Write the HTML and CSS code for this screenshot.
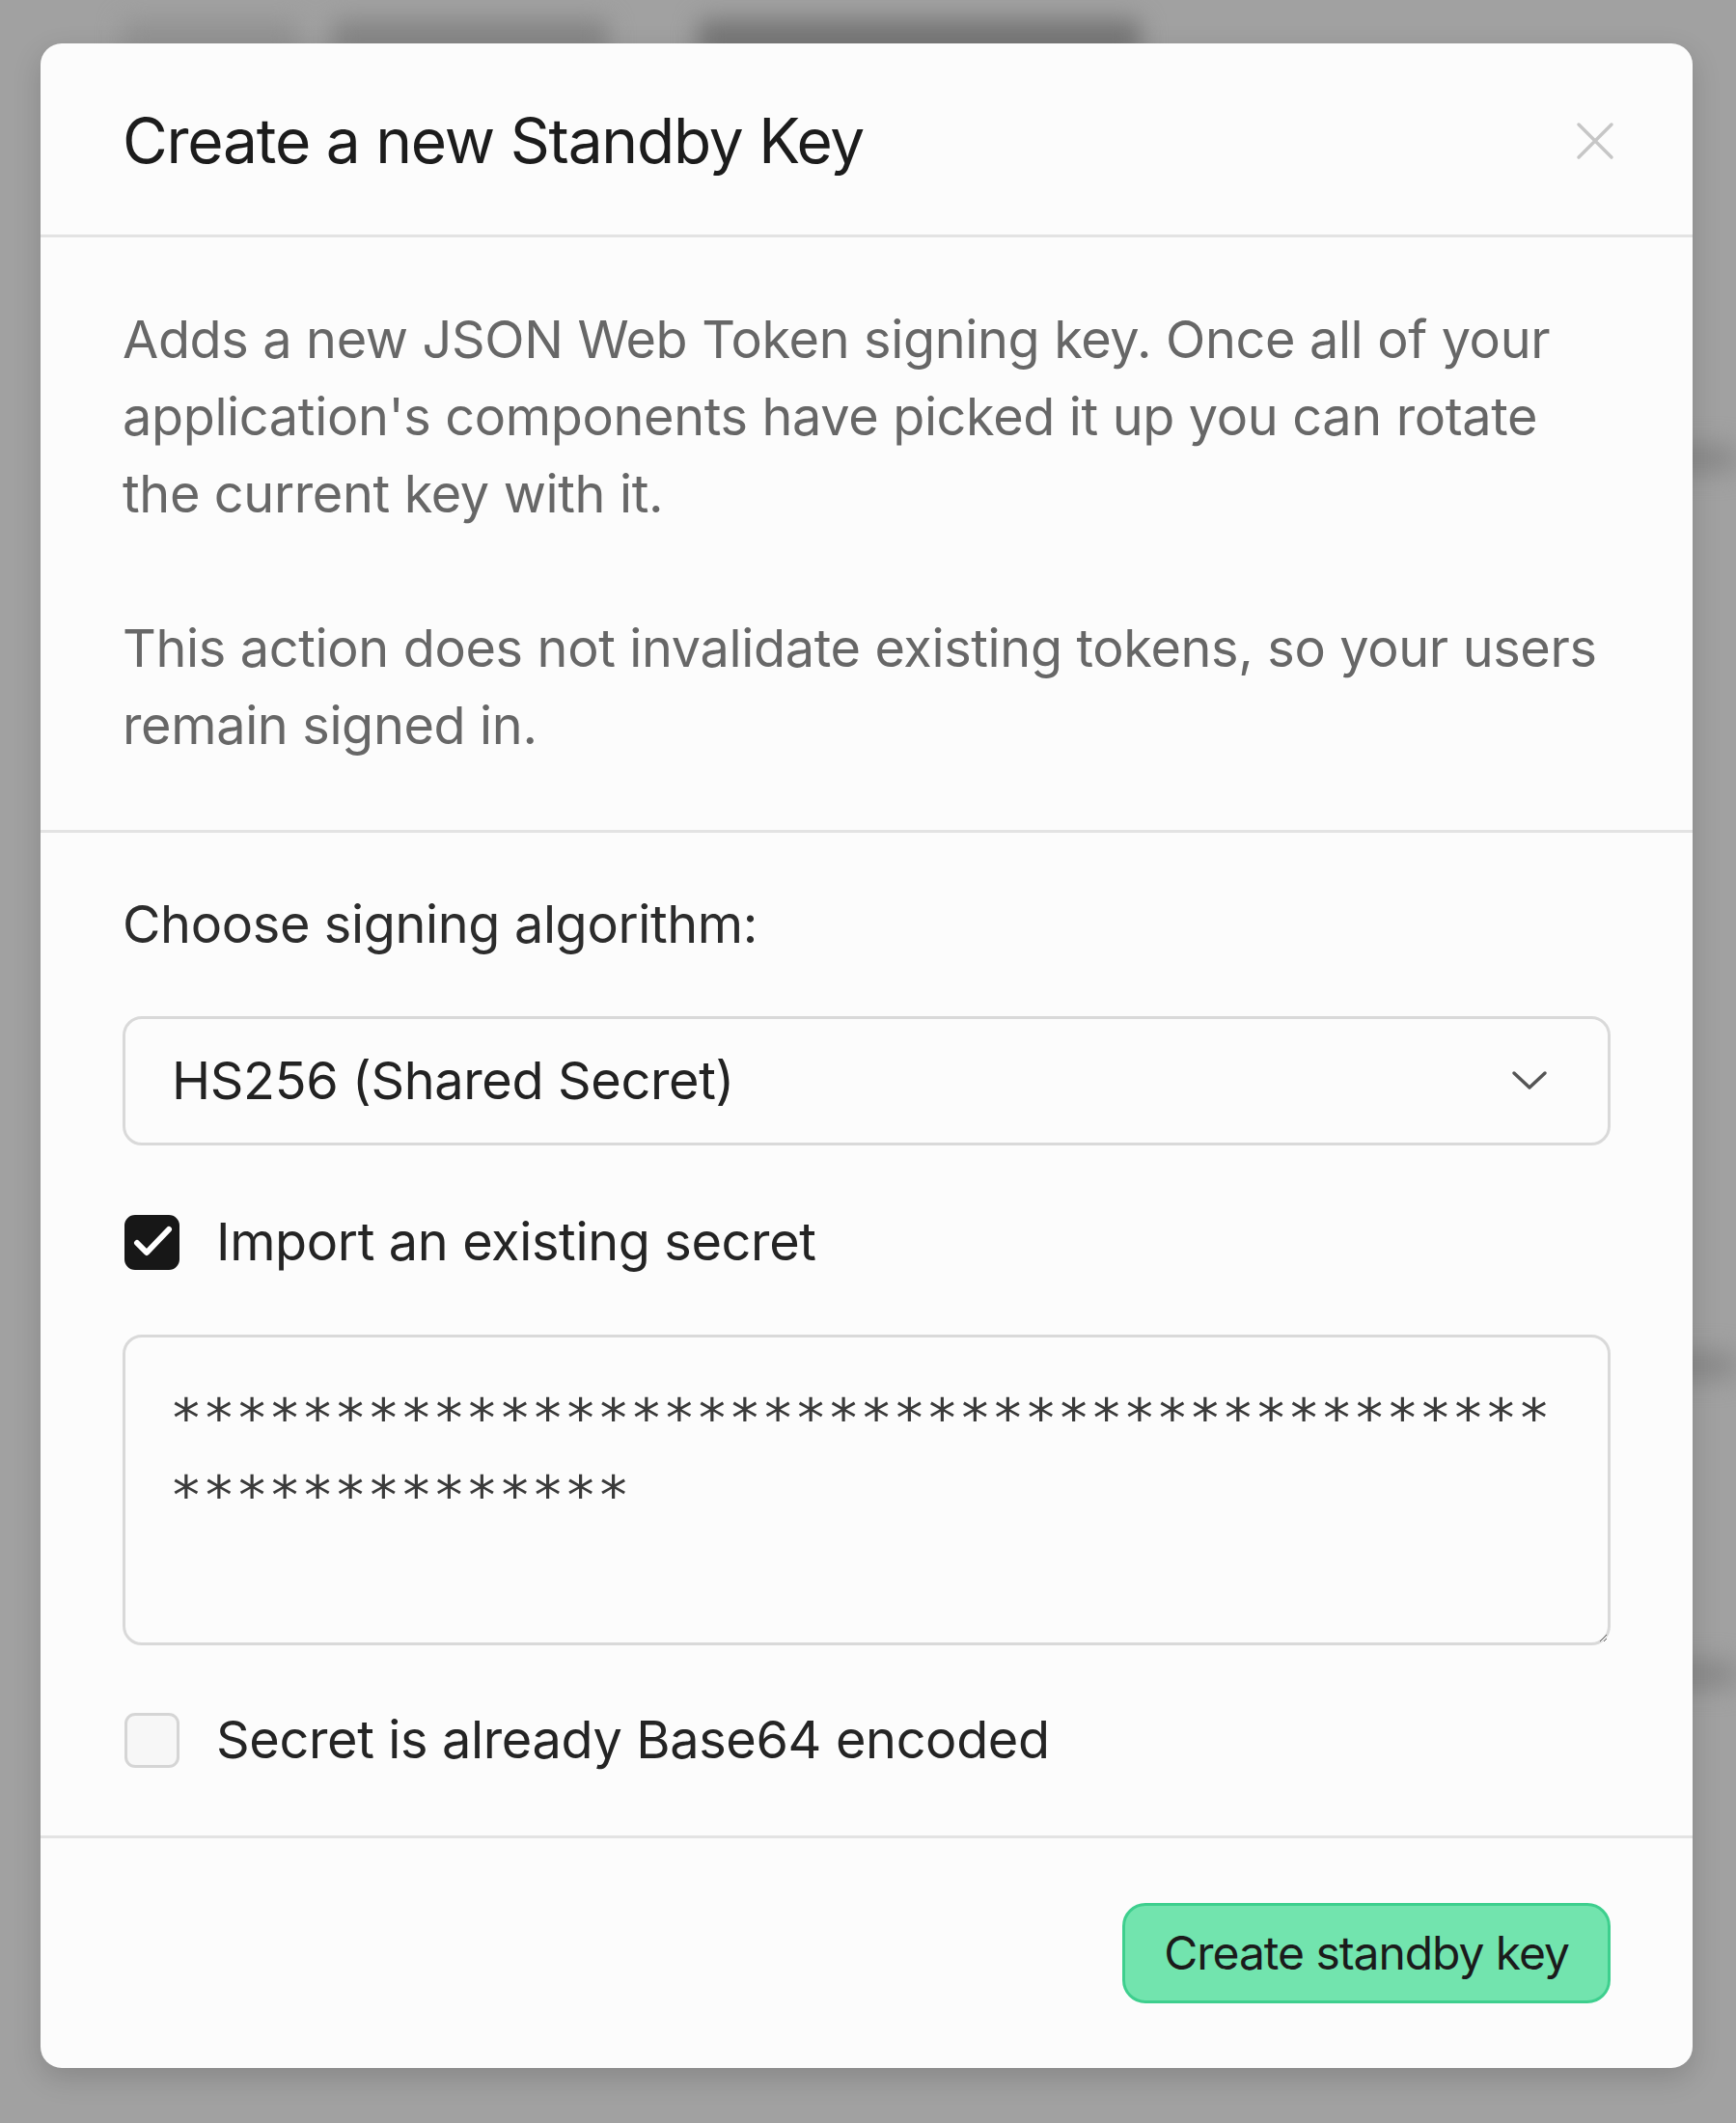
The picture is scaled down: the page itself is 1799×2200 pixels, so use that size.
FILE: index.html
```html
<!DOCTYPE html>
<html lang="en">
<head>
<meta charset="utf-8">
<title>Create a new Standby Key</title>
<link rel="stylesheet" href="styles.css">
</head>
<body>
<div class="page" aria-hidden="true">
  <div class="page-top">
    <span class="blur-block b1"></span>
    <span class="blur-block b2"></span>
    <span class="blur-block b3"></span>
  </div>
  <div class="page-side">
    <span class="side-blob s1"></span>
    <span class="side-blob s2"></span>
    <span class="side-blob s3"></span>
  </div>
</div>
<div class="overlay">
  <div class="modal" role="dialog" aria-labelledby="modal-title">
    <div class="modal-header">
      <h2 class="modal-title" id="modal-title">Create a new Standby Key</h2>
      <button class="close-btn" type="button" aria-label="Close">
        <svg width="40" height="40" viewBox="0 0 40 40" fill="none" stroke="currentColor" stroke-width="3.5" stroke-linecap="round"><path d="M3 3 L37 37 M37 3 L3 37"/></svg>
      </button>
    </div>
    <div class="modal-section intro">
      <p>Adds a new JSON Web Token signing key. Once all of your application's components have picked it up you can rotate the current key with it.</p>
      <p>This action does not invalidate existing tokens, so your users remain signed in.</p>
    </div>
    <div class="modal-section form">
      <div class="field-label">Choose signing algorithm:</div>
      <div class="select">
        <span class="select-value">HS256 (Shared Secret)</span>
        <svg class="chevron" width="38" height="22" viewBox="0 0 38 22" fill="none" stroke="currentColor" stroke-width="3.5" stroke-linecap="round" stroke-linejoin="round"><path d="M3 3 L19 18 L35 3"/></svg>
      </div>
      <div class="check-row">
        <span class="checkbox checked">
          <svg width="56" height="56" viewBox="0 0 56 56" fill="none" stroke="#ffffff" stroke-width="6" stroke-linecap="round" stroke-linejoin="round"><path d="M12 29 L22 39 L45 15"/></svg>
        </span>
        <span class="check-label">Import an existing secret</span>
      </div>
      <textarea class="secret" readonly>********************************************************</textarea>
      <div class="check-row second">
        <span class="checkbox"></span>
        <span class="check-label">Secret is already Base64 encoded</span>
      </div>
    </div>
    <div class="modal-footer">
      <button class="primary-btn" type="button">Create standby key</button>
    </div>
  </div>
</div>
</body>
</html>
```
FILE: styles.css
```css
* { box-sizing: border-box; }

html, body {
  margin: 0;
  padding: 0;
}

body {
  width: 1799px;
  height: 2200px;
  background: #a1a1a1;
  font-family: Inter, "Noto Sans", Arial, sans-serif;
  letter-spacing: -0.022em;
  position: relative;
  overflow: hidden;
}

/* blurred page behind the dialog */
.page {
  filter: blur(12px);
}

.page-top {
  display: flex;
  padding: 20px 0 0 126px;
}

.blur-block {
  height: 40px;
  border-radius: 8px;
  background: #868686;
}

.b1 { width: 184px; background: #939393; }
.b2 { width: 287px; margin-left: 34px; }
.b3 { width: 459px; margin-left: 92px; background: #767676; }

.page-side {
  display: flex;
  flex-direction: column;
  align-items: flex-end;
}

.side-blob {
  width: 120px;
  height: 30px;
  border-radius: 6px;
  background: #8a8a8a;
}

.s1 { margin-top: 400px; }
.s2 { margin-top: 910px; }
.s3 { margin-top: 290px; }

/* dialog */
.overlay {
  position: absolute;
  inset: 0;
}

.modal {
  position: absolute;
  left: 42px;
  top: 45px;
  width: 1712px;
  background: #fcfcfc;
  border-radius: 22px;
  box-shadow: 0 10px 30px rgba(0, 0, 0, 0.16);
  display: flex;
  flex-direction: column;
  overflow: hidden;
}

.modal-header {
  height: 201px;
  padding: 4px 85px 0 85px;
  border-bottom: 3px solid #e3e3e3;
  display: flex;
  align-items: center;
  justify-content: space-between;
}

.modal-title {
  margin: 0;
  font-size: 64px;
  line-height: 80px;
  font-weight: 400;
  letter-spacing: -0.019em;
  color: #1c1c1c;
}

.close-btn {
  border: 0;
  background: none;
  padding: 0;
  margin-right: -4px;
  width: 40px;
  height: 40px;
  color: #c6c6c6;
  display: flex;
}

.modal-section {
  border-bottom: 3px solid #e3e3e3;
}

.intro {
  padding: 66px 85px 68px;
}

.intro p {
  margin: 0;
  font-size: 54px;
  line-height: 80px;
  color: #676767;
}

.intro p + p {
  margin-top: 80px;
}

.form {
  padding: 55px 85px 59px;
  display: flex;
  flex-direction: column;
}

.field-label {
  font-size: 54px;
  line-height: 80px;
  color: #2c2c2c;
}

.select {
  margin-top: 55px;
  height: 134px;
  border: 3px solid #d9d9d9;
  border-radius: 20px;
  padding: 0 62px 0 48px;
  display: flex;
  align-items: center;
  justify-content: space-between;
  background: #fcfcfc;
}

.select-value {
  font-size: 54px;
  line-height: 80px;
  color: #222222;
}

.chevron {
  color: #555555;
}

.check-row {
  margin-top: 60px;
  height: 80px;
  display: flex;
  align-items: center;
  gap: 38px;
}

.check-row.second {
  margin-top: 58px;
}

.checkbox {
  width: 57px;
  height: 57px;
  margin-left: 2px;
  border-radius: 11px;
  border: 3px solid #d5d5d5;
  background: #f7f7f7;
  display: flex;
  align-items: center;
  justify-content: center;
  flex: none;
}

.checkbox.checked {
  background: #171717;
  border-color: #171717;
}

.checkbox svg {
  flex: none;
}

.check-label {
  font-size: 54px;
  line-height: 80px;
  color: #242424;
}

.secret {
  display: block;
  width: 100%;
  margin-top: 56px;
  height: 322px;
  border: 3px solid #d9d9d9;
  border-radius: 20px;
  padding: 44px 50px 20px 46px;
  font-family: "DejaVu Sans Mono", "Liberation Mono", monospace;
  font-size: 56px;
  line-height: 80px;
  letter-spacing: 0.35px;
  color: #3a3a3a;
  background: #fcfcfc;
  resize: vertical;
  outline: none;
  overflow: hidden;
}

.modal-footer {
  height: 238px;
  padding: 0 85px;
  display: flex;
  align-items: center;
  justify-content: flex-end;
}

.primary-btn {
  height: 104px;
  padding: 0 40px;
  border: 3px solid #3ecf8e;
  border-radius: 24px;
  background: #72e4ae;
  font-family: Inter, "Noto Sans", Arial, sans-serif;
  font-size: 48px;
  line-height: 60px;
  letter-spacing: -0.022em;
  color: #1b1b1b;
}
```
